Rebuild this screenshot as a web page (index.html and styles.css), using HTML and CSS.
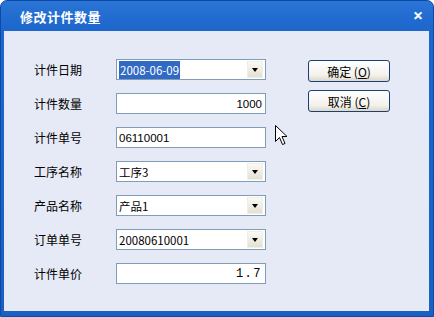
FILE: index.html
```html
<!DOCTYPE html>
<html lang="zh-CN">
<head>
    <meta charset="UTF-8">
    <meta name="viewport" content="width=device-width, initial-scale=1.0">
    <title>修改计件数量</title>
    <link rel="stylesheet" href="styles.css">
</head>
<body>
    <div class="window">
        <div class="titlebar">
            <span class="title">修改计件数量</span>
            <span class="close">&#x2715;</span>
        </div>
        <div class="panel">
            <div class="form">
                <div class="row">
                    <label>计件日期</label>
                    <div class="field combo"><span class="text"><span class="selected">2008-06-09</span></span><span class="drop"></span></div>
                </div>
                <div class="row">
                    <label>计件数量</label>
                    <div class="field num"><span class="text">1000</span></div>
                </div>
                <div class="row">
                    <label>计件单号</label>
                    <div class="field"><span class="text">06110001</span></div>
                </div>
                <div class="row">
                    <label>工序名称</label>
                    <div class="field combo"><span class="text">工序3</span><span class="drop"></span></div>
                </div>
                <div class="row">
                    <label>产品名称</label>
                    <div class="field combo"><span class="text">产品1</span><span class="drop"></span></div>
                </div>
                <div class="row">
                    <label>订单单号</label>
                    <div class="field combo"><span class="text">20080610001</span><span class="drop"></span></div>
                </div>
                <div class="row">
                    <label>计件单价</label>
                    <div class="field num"><span class="text mono">1.7</span></div>
                </div>
            </div>
            <div class="buttons">
                <button class="btn">确定 (<u>O</u>)</button>
                <button class="btn">取消 (<u>C</u>)</button>
            </div>
            <!-- mouse pointer -->
            <svg class="cursor" width="13" height="21" viewBox="0 0 13 21">
                <path d="M0.5 0.5 L0.5 16.5 L4.5 12.5 L7.5 19.5 L10 18.5 L7 11.5 L12 11.5 Z" fill="#fff" stroke="#000" stroke-width="1"/>
            </svg>
        </div>
    </div>
</body>
</html>
```

FILE: styles.css
```css
/* Page */
body {
    margin: 0;
    background: #ffffff;
    font-family: "Noto Sans CJK SC", "Liberation Sans", sans-serif;
    font-size: 12px;
}

/* Window frame */
.window {
    width: 434px;
    height: 317px;
    box-sizing: border-box;
    display: flex;
    flex-direction: column;
    background: linear-gradient(to bottom, #2a74d6 0px, #1c66cc 30px, #1a5fc2 100%);
    border-radius: 7px 7px 0 0;
    border: 1px solid #0b4aa6;
}

.titlebar {
    height: 30px;
    display: flex;
    align-items: center;
    justify-content: space-between;
    padding: 0 10px 0 19px;
    color: #ffffff;
}
.title {
    font-size: 13px;
    font-weight: bold;
    letter-spacing: 0.5px;
}
.close {
    font-size: 12px;
    font-weight: bold;
    font-family: "DejaVu Sans", sans-serif;
    -webkit-text-stroke: 0.6px #ffffff;
}

/* Client area */
.panel {
    position: relative;
    flex: 1;
    margin: 0 4px 5px 3px;
    background: #e6eaf6;
    display: flex;
    padding: 28px 0 0 30px;
}

.form {
    display: flex;
    flex-direction: column;
    gap: 13px;
}
.row {
    display: flex;
    align-items: center;
    height: 21px;
}
.row label {
    width: 82px;
    color: #000000;
    font-size: 12px;
}

/* Text boxes and combo boxes */
.field {
    width: 150px;
    height: 21px;
    box-sizing: border-box;
    border: 1px solid #7f9db9;
    background: #ffffff;
    display: flex;
    align-items: center;
    padding: 0 2px 0 2px;
    font-family: "Liberation Sans", "Noto Sans CJK SC", sans-serif;
    font-size: 11.5px;
    color: #000000;
}
.field .text {
    flex: 1;
    white-space: nowrap;
}
.field.num .text {
    text-align: right;
    padding-right: 1px;
}
.mono {
    font-family: "Liberation Mono", monospace;
    font-size: 12px;
    letter-spacing: 1.5px;
}
.selected {
    background: #316ac5;
    color: #ffffff;
    padding: 1px 1px;
}
.combo .text {
    font-family: "Noto Sans CJK SC", "Liberation Sans", sans-serif;
}
.drop {
    width: 16px;
    height: 17px;
    box-sizing: border-box;
    border: 1px solid #f0efe6;
    background: linear-gradient(to bottom, #faf9f4, #e4e1d2);
    position: relative;
}
.drop::after {
    content: "";
    position: absolute;
    left: 3.5px;
    top: 6px;
    border-left: 3.5px solid transparent;
    border-right: 3.5px solid transparent;
    border-top: 4px solid #000000;
}

/* Buttons */
.buttons {
    display: flex;
    flex-direction: column;
    gap: 8px;
    margin-left: 42px;
    padding-top: 1px;
}
.btn {
    width: 82px;
    height: 22px;
    border: 1px solid #1c3f78;
    border-radius: 3px;
    background: linear-gradient(to bottom, #ffffff, #f3f2ec 70%, #dcd8c8);
    font-family: "Noto Sans CJK SC", "Liberation Sans", sans-serif;
    font-size: 12px;
    color: #000000;
    padding: 0;
}

/* Mouse pointer over the dialog */
.cursor {
    position: absolute;
    left: 271px;
    top: 94px;
}
```
